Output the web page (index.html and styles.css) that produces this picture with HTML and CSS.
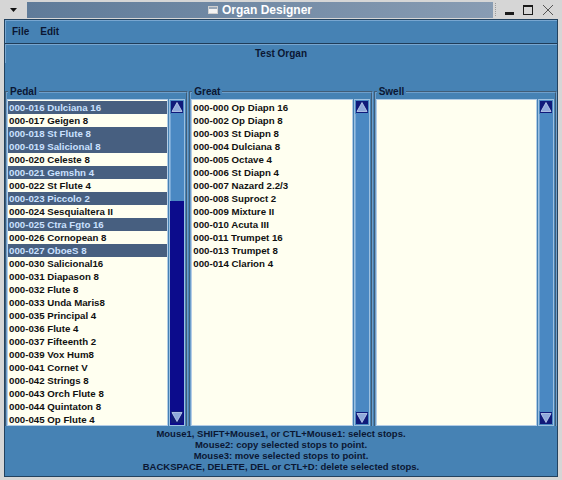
FILE: index.html
```html
<!DOCTYPE html>
<html>
<head>
<meta charset="utf-8">
<title>Organ Designer</title>
<link rel="stylesheet" href="styles.css">
</head>
<body>
<div class="titlebar">
  <div class="tb-menu">
    <svg width="9" height="6" viewBox="0 0 9 6"><polygon points="1,1 8,1 4.5,5" fill="#111"/></svg>
  </div>
  <div class="tb-title">
    <svg width="10" height="8" viewBox="0 0 10 8"><rect x="0.5" y="0.5" width="9" height="7" fill="#f4f4f4" stroke="#d0d0d0"/><rect x="1" y="1" width="8" height="2" fill="#9aa8b8"/></svg>
    <span>Organ Designer</span>
  </div>
  <div class="tb-buttons">
    <svg width="69" height="19" viewBox="0 0 69 19">
      <line x1="2.5" y1="3" x2="2.5" y2="17" stroke="#9a9a9a" stroke-dasharray="1 1"/>
      <rect x="12" y="12" width="9" height="3" fill="#1a1a1a"/>
      <rect x="30.5" y="5.5" width="9" height="9" fill="none" stroke="#1a1a1a"/>
      <rect x="30" y="5" width="10" height="2" fill="#1a1a1a"/>
      <line x1="50" y1="5" x2="60" y2="15" stroke="#555" stroke-width="1"/>
      <line x1="60" y1="5" x2="50" y2="15" stroke="#555" stroke-width="1"/>
    </svg>
  </div>
</div>
<div class="client">
  <div class="menubar"><span>File</span><span>Edit</span></div>
  <div class="header">Test Organ</div>
  <div class="panels">
    <fieldset class="panel">
      <legend>Pedal</legend>
      <div class="lw">
        <div class="list">
          <div class="row sel">000-016 Dulciana 16</div>
          <div class="row">000-017 Geigen 8</div>
          <div class="row sel">000-018 St Flute 8</div>
          <div class="row sel">000-019 Salicional 8</div>
          <div class="row">000-020 Celeste 8</div>
          <div class="row sel">000-021 Gemshn 4</div>
          <div class="row">000-022 St Flute 4</div>
          <div class="row sel">000-023 Piccolo 2</div>
          <div class="row">000-024 Sesquialtera II</div>
          <div class="row sel">000-025 Ctra Fgto 16</div>
          <div class="row">000-026 Cornopean 8</div>
          <div class="row sel">000-027 OboeS 8</div>
          <div class="row">000-030 Salicional16</div>
          <div class="row">000-031 Diapason 8</div>
          <div class="row">000-032 Flute 8</div>
          <div class="row">000-033 Unda Maris8</div>
          <div class="row">000-035 Principal 4</div>
          <div class="row">000-036 Flute 4</div>
          <div class="row">000-037 Fifteenth 2</div>
          <div class="row">000-039 Vox Hum8</div>
          <div class="row">000-041 Cornet V</div>
          <div class="row">000-042 Strings 8</div>
          <div class="row">000-043 Orch Flute 8</div>
          <div class="row">000-044 Quintaton 8</div>
          <div class="row">000-045 Op Flute 4</div>
        </div>
        <div class="sb">
          <div class="arrow"><svg width="12" height="12" viewBox="0 0 12 12"><rect width="12" height="12" fill="#101a7a"/><polygon points="6,1.5 11,10.5 1,10.5" fill="#8fa9da" stroke="#c4d4f0" stroke-width="0.8"/></svg></div>
          <div class="trough"><div class="gap"></div><div class="thumb"></div></div>
          <div class="arrow dark"><svg width="12" height="12" viewBox="0 0 12 12"><rect width="12" height="12" fill="#101a7a"/><polygon points="1,1.5 11,1.5 6,10.5" fill="#8fa9da" stroke="#c4d4f0" stroke-width="0.8"/></svg></div>
        </div>
      </div>
    </fieldset>
    <fieldset class="panel">
      <legend>Great</legend>
      <div class="lw">
        <div class="list">
          <div class="row">000-000 Op Diapn 16</div>
          <div class="row">000-002 Op Diapn 8</div>
          <div class="row">000-003 St Diapn 8</div>
          <div class="row">000-004 Dulciana 8</div>
          <div class="row">000-005 Octave 4</div>
          <div class="row">000-006 St Diapn 4</div>
          <div class="row">000-007 Nazard 2.2/3</div>
          <div class="row">000-008 Suproct 2</div>
          <div class="row">000-009 Mixture II</div>
          <div class="row">000-010 Acuta III</div>
          <div class="row">000-011 Trumpet 16</div>
          <div class="row">000-013 Trumpet 8</div>
          <div class="row">000-014 Clarion 4</div>
        </div>
        <div class="sb">
          <div class="arrow"><svg width="12" height="12" viewBox="0 0 12 12"><rect width="12" height="12" fill="#101a7a"/><polygon points="6,1.5 11,10.5 1,10.5" fill="#8fa9da" stroke="#c4d4f0" stroke-width="0.8"/></svg></div>
          <div class="trough"></div>
          <div class="arrow"><svg width="12" height="12" viewBox="0 0 12 12"><rect width="12" height="12" fill="#101a7a"/><polygon points="1,1.5 11,1.5 6,10.5" fill="#8fa9da" stroke="#c4d4f0" stroke-width="0.8"/></svg></div>
        </div>
      </div>
    </fieldset>
    <fieldset class="panel">
      <legend>Swell</legend>
      <div class="lw">
        <div class="list"></div>
        <div class="sb">
          <div class="arrow"><svg width="12" height="12" viewBox="0 0 12 12"><rect width="12" height="12" fill="#101a7a"/><polygon points="6,1.5 11,10.5 1,10.5" fill="#8fa9da" stroke="#c4d4f0" stroke-width="0.8"/></svg></div>
          <div class="trough"></div>
          <div class="arrow"><svg width="12" height="12" viewBox="0 0 12 12"><rect width="12" height="12" fill="#101a7a"/><polygon points="1,1.5 11,1.5 6,10.5" fill="#8fa9da" stroke="#c4d4f0" stroke-width="0.8"/></svg></div>
        </div>
      </div>
    </fieldset>
  </div>
  <div class="status">
    <div>Mouse1, SHIFT+Mouse1, or CTL+Mouse1: select stops.</div>
    <div>Mouse2: copy selected stops to point.</div>
    <div>Mouse3: move selected stops to point.</div>
    <div>BACKSPACE, DELETE, DEL or CTL+D: delete selected stops.</div>
  </div>
</div>
</body>
</html>
```
FILE: styles.css
```css
html, body {
  margin: 0;
  padding: 0;
}
body {
  width: 562px;
  height: 480px;
  overflow: hidden;
  background: #d6d6d6;
  font-family: "Liberation Sans", Arial, sans-serif;
  display: flex;
  flex-direction: column;
}
.titlebar {
  height: 19px;
  flex: none;
  display: flex;
}
.tb-menu {
  width: 27px;
  display: flex;
  align-items: center;
  justify-content: center;
}
.tb-title {
  flex: 1;
  margin: 2px 0 1px;
  background: linear-gradient(to right, #5f7b99, #889cb3);
  color: #ffffff;
  font-weight: bold;
  font-size: 12px;
  display: flex;
  align-items: center;
  justify-content: center;
  gap: 4px;
}
.tb-buttons {
  width: 69px;
  display: flex;
}
.client {
  flex: 1;
  margin: 0 4px 3px;
  background: #4682b4;
  border: 1px solid #22425f;
  display: flex;
  flex-direction: column;
  color: #0b1733;
  font-weight: bold;
  font-size: 10px;
}
.menubar {
  height: 23px;
  flex: none;
  border-bottom: 1px solid #1f3c58;
  box-shadow: inset 1px 1px 0 #78a6d0;
  display: flex;
  align-items: center;
  padding-left: 7px;
  gap: 11px;
}
.header {
  height: 19px;
  flex: none;
  line-height: 19px;
  text-align: center;
  box-shadow: inset 1px 1px 0 #78a6d0;
}
.panels {
  margin-top: 23px;
  height: 340px;
  flex: none;
  display: flex;
  gap: 1px;
}
.panel {
  flex: 1;
  min-width: 0;
  margin: 0;
  padding: 1px 1px 0 0;
  border: 2px groove #6f9fcb;
  border-bottom: 0;
  display: flex;
  flex-direction: column;
}
.panel legend {
  padding: 0 2px;
  margin-left: 1px;
  line-height: 12px;
  font-size: 10px;
}
.lw {
  flex: 1;
  display: flex;
  gap: 1px;
  min-height: 0;
}
.list {
  flex: 1;
  min-width: 0;
  background: #fffff0;
  border: 1px solid #b4cde6;
  padding-top: 1px;
  overflow: hidden;
  color: #111111;
}
.row {
  height: 13px;
  line-height: 13px;
  padding-left: 1px;
  white-space: nowrap;
  font-size: 9.7px;
}
.row.sel {
  background: #475f80;
  color: #cae1ff;
}
.sb {
  width: 14px;
  border: 1px solid #9cc0e0;
  background: #4a88c2;
  display: flex;
  flex-direction: column;
}
.arrow {
  height: 12px;
  padding: 1px;
  flex: none;
}
.arrow svg {
  display: block;
}
.arrow.dark {
  background: #0c0c8c;
  padding-top: 0;
  height: 13px;
}
.trough {
  flex: 1;
  display: flex;
  flex-direction: column;
  box-shadow: inset 1px 0 0 #78a8d6;
}
.gap {
  height: 87px;
  flex: none;
}
.thumb {
  flex: 1;
  background: #0c0c8c;
}
.status {
  flex: 1;
  padding-top: 2px;
  text-align: center;
  line-height: 11px;
  font-size: 9.5px;
}
```
